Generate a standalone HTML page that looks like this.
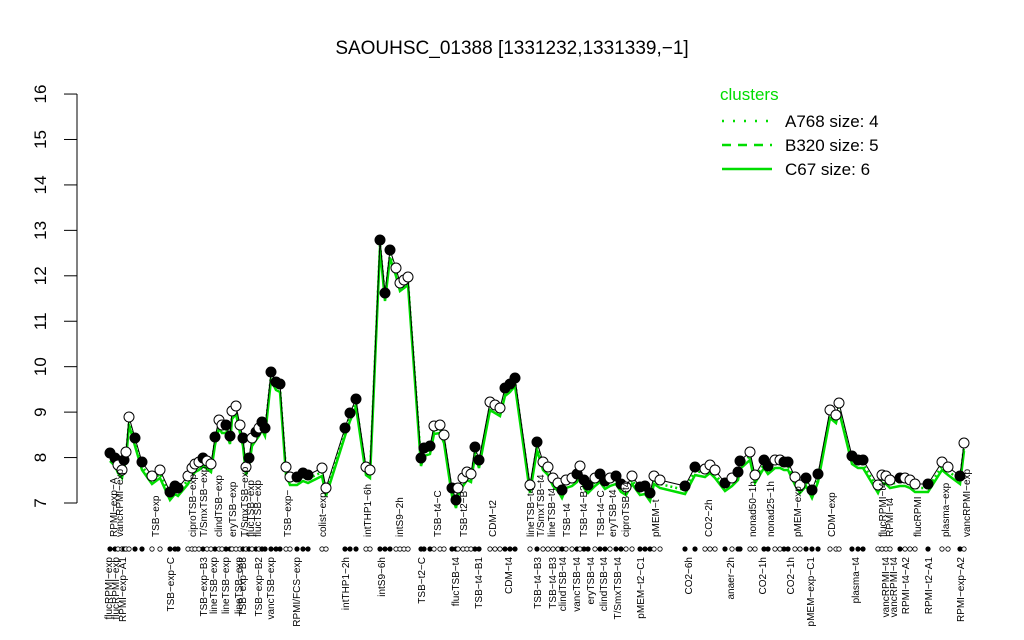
<!DOCTYPE html>
<html><head><meta charset="utf-8"><style>
html,body{margin:0;padding:0;background:#fff;width:1024px;height:640px;overflow:hidden}
svg{display:block;font-family:"Liberation Sans",sans-serif}
</style></head><body>
<svg id="s" width="1024" height="640" viewBox="0 0 1024 640" xmlns="http://www.w3.org/2000/svg">
<text x="512" y="54" font-size="19" text-anchor="middle">SAOUHSC_01388 [1331232,1331339,−1]</text>
<line x1="77" y1="94" x2="77" y2="503" stroke="#000"/>
<g id="yt"></g>
<text x="720" y="100" font-size="17" fill="#00dd00">clusters</text>
<line x1="722" y1="121" x2="772" y2="121" stroke="#00dd00" stroke-width="2.5" stroke-dasharray="2,9"/>
<line x1="722" y1="145" x2="772" y2="145" stroke="#00dd00" stroke-width="2.5" stroke-dasharray="9,7"/>
<line x1="722" y1="169" x2="772" y2="169" stroke="#00dd00" stroke-width="2.5"/>
<text x="785" y="127" font-size="17">A768 size: 4</text>
<text x="785" y="151" font-size="17">B320 size: 5</text>
<text x="785" y="175" font-size="17">C67 size: 6</text>
<g id="g"></g>
</svg>
<script>
var s=document.getElementById('g'),yt=document.getElementById('yt'),NS='http://www.w3.org/2000/svg';
function el(t,a,p,txt){var e=document.createElementNS(NS,t);for(var k in a)e.setAttribute(k,a[k]);if(txt)e.textContent=txt;(p||s).appendChild(e);return e;}
for(var v=7;v<=16;v++){var y=503-(v-7)*45.44;el('line',{x1:64,y1:y,x2:77,y2:y,stroke:'#000'},yt);el('text',{x:0,y:0,'font-size':17,'text-anchor':'middle',transform:'translate(46,'+y+') rotate(-90)'},yt,String(v));}
var P=[[110,453,1],[115,458,1],[118,465,0],[122,470,0],[124,460,1],[126,452,0],[129,417,0],[135,438,1],[142,462,1],[152,476,0],[160,470,0],[170,492,1],[175,486,1],[178,488,1],[188,476,0],[192,468,0],[195,464,0],[199,462,0],[203,458,1],[207,461,0],[211,464,0],[215,437,1],[219,420,0],[222,425,0],[226,425,1],[230,436,1],[232,411,0],[236,406,0],[240,425,0],[243,438,1],[246,467,0],[249,458,1],[252,438,0],[256,432,1],[259,428,0],[262,422,1],[265,428,1],[271,372,1],[276,382,1],[280,384,1],[286,467,0],[290,477,0],[297,477,1],[303,473,1],[308,475,1],[322,468,0],[326,488,0],[345,428,1],[350,413,1],[356,399,1],[366,467,0],[370,470,0],[380,240,1],[385,293,1],[390,250,1],[396,268,0],[400,283,0],[404,280,0],[408,277,0],[421,458,1],[424,448,1],[430,446,1],[434,426,0],[440,425,0],[444,435,0],[452,488,1],[456,500,1],[458,488,0],[463,478,0],[467,472,0],[471,474,0],[475,447,1],[479,460,1],[490,402,0],[495,405,0],[500,408,0],[505,388,1],[510,384,1],[515,378,1],[530,485,0],[537,442,1],[543,462,0],[548,467,0],[553,478,0],[558,483,0],[562,490,1],[566,480,0],[572,478,0],[577,474,1],[580,466,0],[584,480,1],[588,485,1],[595,478,0],[600,474,1],[605,481,1],[610,478,0],[616,476,1],[621,484,1],[626,487,0],[632,476,0],[640,487,1],[645,486,1],[650,493,1],[654,476,0],[660,480,0],[685,486,1],[695,467,1],[705,469,0],[710,465,0],[715,470,0],[725,483,1],[732,478,0],[738,472,1],[740,461,1],[750,452,0],[755,475,0],[764,460,1],[768,466,1],[775,460,0],[780,460,0],[784,462,1],[788,462,1],[795,477,0],[800,485,0],[806,478,1],[812,490,1],[818,474,1],[830,410,0],[836,415,0],[839,403,0],[852,456,1],[858,460,1],[863,460,1],[878,485,0],[882,475,0],[886,476,0],[890,480,0],[900,478,1],[905,478,0],[910,480,0],[915,484,0],[928,484,1],[942,462,0],[948,467,0],[960,476,1],[964,443,0]];
el('polyline',{points:P.map(function(p){return p[0]+','+(p[1]+4)}).join(' '),fill:'none',stroke:'#00dd00','stroke-width':2.5,'stroke-dasharray':'2,3'});
el('polyline',{points:P.map(function(p){return p[0]+','+(p[1]+8)}).join(' '),fill:'none',stroke:'#00dd00','stroke-width':2.5});
el('polyline',{points:P.map(function(p){return p[0]+','+p[1]}).join(' '),fill:'none',stroke:'#000','stroke-width':1});
P.forEach(function(p){el('circle',{cx:p[0],cy:p[1],r:5,fill:p[2]?'#000':'#fff',stroke:'#000','stroke-width':1});
el('circle',{cx:p[0],cy:549,r:2.2,fill:p[2]?'#000':'#fff',stroke:'#000','stroke-width':0.8});});
var T=[[113,'RPMI−exp−A'],[119,'vancRPMI−exp'],[155,'TSB−exp'],[192,'ciproTSB−exp'],[203,'T/SmxTSB−exp'],[218,'clindTSB−exp'],[232,'eryTSB−exp'],[244,'T/SmxTSB−exp'],[250,'flucTSB−exp'],[257,'flucTSB−exp'],[287,'TSB−exp−'],[322,'colist−exp'],[367,'intTHP1−6h'],[399,'intS9−2h'],[437,'TSB−t4−C'],[463,'TSB−t2−B'],[492,'CDM−t2'],[530,'lineTSB−t4'],[540,'T/SmxTSB−t4'],[551,'lineTSB−t4'],[566,'TSB−t4'],[583,'TSB−t4−B2'],[600,'TSB−t4−C'],[612,'eryTSB−t4'],[625,'ciproTSB−t4'],[655,'pMEM−t'],[708,'CO2−2h'],[752,'nonad50−1h'],[770,'nonad25−1h'],[797,'pMEM−exp'],[831,'CDM−exp'],[882,'flucRPMI−t4'],[889,'RPMI−t4'],[917,'flucRPMI'],[945,'plasma−exp'],[966,'vancRPMI−exp']];
T.forEach(function(t){el('text',{'font-size':10,transform:'translate('+(t[0]+4)+',537) rotate(-90)'},s,t[1]);});
var B=[[108,'flucRPMI−exp'],[115,'flucRPMI−exp'],[122,'RPMI−exp−A1'],[170,'TSB−exp−C'],[203,'TSB−exp−B3'],[213,'lineTSB−exp'],[225,'lineTSB−exp'],[238,'lineTSB−exp'],[242,'TSB−exp−B3'],[258,'TSB−exp−B2'],[270,'vancTSB−exp'],[296,'RPMI/FCS−exp'],[345,'intTHP1−2h'],[381,'intS9−6h'],[421,'TSB−t2−C'],[455,'flucTSB−t4'],[478,'TSB−t4−B1'],[508,'CDM−t4'],[537,'TSB−t4−B3'],[552,'TSB−t4−B3'],[562,'clindTSB−t4'],[576,'vancTSB−t4'],[590,'eryTSB−t4'],[603,'clindTSB−t4'],[617,'T/SmxTSB−t4'],[640,'pMEM−t2−C1'],[688,'CO2−6h'],[730,'anaer−2h'],[762,'CO2−1h'],[790,'CO2−1h'],[810,'pMEM−exp−C1'],[855,'plasma−t4'],[885,'vancRPMI−t4'],[893,'vancRPMI−t4'],[905,'RPMI−t4−A2'],[928,'RPMI−t2−A1'],[960,'RPMI−exp−A2']];
B.forEach(function(t){el('text',{'font-size':10,'text-anchor':'end',transform:'translate('+(t[0]+4)+',557) rotate(-90)'},s,t[1]);});
</script>
</body></html>
